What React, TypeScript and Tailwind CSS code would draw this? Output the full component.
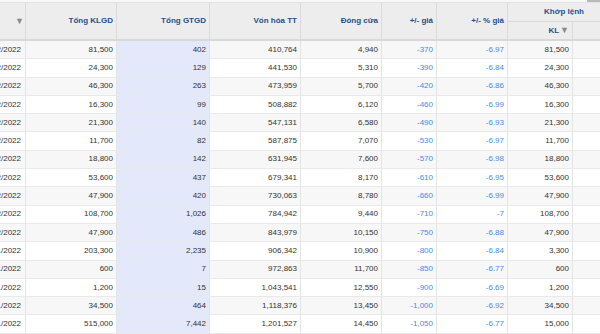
const rows = [
  ['30/12/2022', '81,500', '402', '410,764', '4,940', '-370', '-6.97', '81,500'],
  ['29/12/2022', '24,300', '129', '441,530', '5,310', '-390', '-6.84', '24,300'],
  ['28/12/2022', '46,300', '263', '473,959', '5,700', '-420', '-6.86', '46,300'],
  ['27/12/2022', '16,300', '99', '508,882', '6,120', '-460', '-6.99', '16,300'],
  ['26/12/2022', '21,300', '140', '547,131', '6,580', '-490', '-6.93', '21,300'],
  ['23/12/2022', '11,700', '82', '587,875', '7,070', '-530', '-6.97', '11,700'],
  ['22/12/2022', '18,800', '142', '631,945', '7,600', '-570', '-6.98', '18,800'],
  ['21/12/2022', '53,600', '437', '679,341', '8,170', '-610', '-6.95', '53,600'],
  ['20/12/2022', '47,900', '420', '730,063', '8,780', '-660', '-6.99', '47,900'],
  ['19/12/2022', '108,700', '1,026', '784,942', '9,440', '-710', '-7', '108,700'],
  ['16/12/2022', '47,900', '486', '843,979', '10,150', '-750', '-6.88', '47,900'],
  ['30/11/2022', '203,300', '2,235', '906,342', '10,900', '-800', '-6.84', '3,300'],
  ['29/11/2022', '600', '7', '972,863', '11,700', '-850', '-6.77', '600'],
  ['28/11/2022', '1,200', '15', '1,043,541', '12,550', '-900', '-6.69', '1,200'],
  ['25/11/2022', '34,500', '464', '1,118,376', '13,450', '-1,000', '-6.92', '34,500'],
  ['24/11/2022', '515,000', '7,442', '1,201,527', '14,450', '-1,050', '-6.77', '15,000'],
];

const cols = 'grid grid-cols-[26px_91px_93px_91px_81px_55px_71px_65px_47px]';

function Tri() {
  return <span className="text-[9px] text-[#8a8a8a] leading-none">▼</span>;
}

export default function App() {
  return (
    <div
      className="w-[600px] h-[334px] overflow-hidden bg-white text-[8px] text-[#333]"
      style={{ fontFamily: '"Liberation Sans", Arial, sans-serif' }}
    >
      <div className="w-[620px]">
        <div className="h-[3px] bg-[#f7f7f7] border-b border-[#e2e2e2] flex justify-end">
          <div className="w-[13px] h-[2px] bg-[#b9b9b9] mr-[20px]" />
        </div>
        <div className={`${cols} h-[38px] bg-[#ededed] border-b-2 border-[#d8d8d8] font-bold text-[#1f4f8e]`}>
          <div className="flex justify-end items-center pr-[1px] border-r border-[#dadada] overflow-hidden whitespace-nowrap">
            <span className="mr-[18px]">Ngày</span>
            <Tri />
          </div>
          <div className="flex justify-end items-center pr-[3px] border-r border-[#dadada]">Tổng KLGD</div>
          <div className="flex justify-end items-center pr-[3px] border-r border-[#dadada]">Tổng GTGD</div>
          <div className="flex justify-end items-center pr-[3px] border-r border-[#dadada]">Vốn hóa TT</div>
          <div className="flex justify-end items-center pr-[3px] border-r border-[#dadada]">Đóng cửa</div>
          <div className="flex justify-end items-center pr-[3px] border-r border-[#dadada]">+/- giá</div>
          <div className="flex justify-end items-center pr-[3px] border-r border-[#dadada]">+/- % giá</div>
          <div className="col-span-2 flex flex-col">
            <div className="h-[19px] flex items-center justify-center border-b border-[#dadada]">Khớp lệnh</div>
            <div className="flex-1 flex">
              <div className="w-[65px] flex justify-end items-center gap-[1px] pr-[3px] border-r border-[#dadada]">
                <span>KL</span>
                <Tri />
              </div>
              <div className="flex-1" />
            </div>
          </div>
        </div>
        {rows.map((r, i) => (
          <div
            key={i}
            className={`${cols} h-[18.3px] border-b border-[#e9e9e9] ${i % 2 === 0 ? 'bg-[#f7f7f7]' : 'bg-white'}`}
          >
            <div className="flex justify-end items-center pr-[4px] border-r border-[#e4e4e4] overflow-hidden whitespace-nowrap">
              {r[0]}
            </div>
            <div className="flex justify-end items-center pr-[3px] border-r border-[#e4e4e4]">{r[1]}</div>
            <div className="flex justify-end items-center pr-[3px] border-r border-[#e4e4e4] bg-[#e3e9fb]">{r[2]}</div>
            <div className="flex justify-end items-center pr-[3px] border-r border-[#e4e4e4]">{r[3]}</div>
            <div className="flex justify-end items-center pr-[3px] border-r border-[#e4e4e4]">{r[4]}</div>
            <div className="flex justify-end items-center pr-[3px] border-r border-[#e4e4e4] text-[#3f8ce8]">{r[5]}</div>
            <div className="flex justify-end items-center pr-[3px] border-r border-[#e4e4e4] text-[#3f8ce8]">{r[6]}</div>
            <div className="flex justify-end items-center pr-[3px] border-r border-[#e4e4e4]">{r[7]}</div>
            <div />
          </div>
        ))}
      </div>
    </div>
  );
}
